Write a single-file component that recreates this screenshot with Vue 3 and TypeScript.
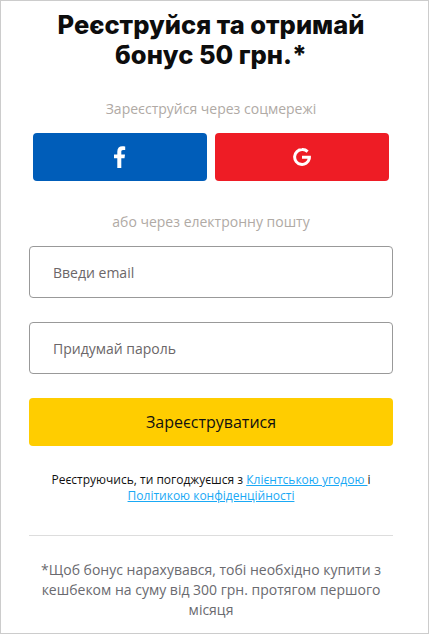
<script setup lang="ts">
const title = 'Реєструйся та отримай бонус 50 грн.*'
</script>

<template>
  <div class="page">
    <h1 class="title">{{ title }}</h1>
    <p class="hint first">Зареєструйся через соцмережі</p>
    <div class="socials">
      <button class="social fb" aria-label="Facebook">
        <svg width="12" height="22" viewBox="0 0 12 22"><path fill="#fff" d="M3.3 22V12.2H0V8.4h3.3V5.6C3.3 2.1 5.3.3 8.3.3c1.3 0 2.4.1 2.9.2v3.4h-2c-1.6 0-1.9.8-1.9 1.9v2.6h3.7l-.5 3.8H7.3V22z"/></svg>
      </button>
      <button class="social gg" aria-label="Google">
        <svg width="18" height="18" viewBox="0 0 18 18"><path fill="none" stroke="#fff" stroke-width="3" d="M14.6 3.6A7.3 7.3 0 0 0 9 1.6a7.4 7.4 0 1 0 7.2 9.2c.1-.4.2-.9.2-1.5H9"/></svg>
      </button>
    </div>
    <p class="hint second">або через електронну пошту</p>
    <div class="field">Введи email</div>
    <div class="field">Придумай пароль</div>
    <button class="submit">Зареєструватися</button>
    <p class="terms">Реєструючись, ти погоджуєшся з <a href="#">Клієнтською угодою </a>і<br><a href="#">Політикою конфіденційності</a></p>
    <hr class="rule">
    <p class="note">*Щоб бонус нарахувався, тобі необхідно купити з кешбеком на суму від 300 грн. протягом першого місяця</p>
  </div>
</template>

<style>
html, body { margin: 0; background: #fff; }
</style>

<style scoped>
.page {
  box-sizing: border-box;
  width: 429px;
  height: 634px;
  border: 1px solid #ccc;
  padding: 9px 35px 0 28px;
  font-family: "Open Sans", sans-serif;
  background: #fff;
  overflow: hidden;
}
.title {
  margin: 0 -10px;
  font-family: "Inter", sans-serif;
  font-weight: 800;
  font-size: 25.5px;
  line-height: 30px;
  color: #0d0d0d;
  text-align: center;
}
.hint {
  margin: 0;
  font-size: 14px;
  line-height: 20px;
  color: #b0aaa5;
  text-align: center;
}
.first { margin-top: 29px; }
.second { margin-top: 31px; }
.socials {
  display: flex;
  gap: 8px;
  margin: 14px 4px 0;
}
.social {
  flex: 1;
  height: 48px;
  border: 0;
  border-radius: 4px;
  display: flex;
  align-items: center;
  justify-content: center;
  padding: 0;
}
.fb { background: #005db9; }
.gg { background: #ee1c25; }
.field {
  box-sizing: border-box;
  height: 52px;
  margin-top: 24px;
  padding: 0 23px;
  border: 1px solid #999;
  border-radius: 4px;
  font-size: 14px;
  line-height: 51px;
  color: #6b6668;
}
.second + .field { margin-top: 14px; }
.submit {
  display: block;
  width: 100%;
  height: 48px;
  margin-top: 24px;
  border: 0;
  border-radius: 4px;
  background: #ffcd00;
  color: #111;
  font-family: inherit;
  font-size: 16px;
}
.terms {
  margin: 26px 0 0;
  font-size: 12px;
  line-height: 16px;
  color: #111;
  text-align: center;
}
.terms a { color: #1aa9f5; }
.rule {
  margin: 31px 0 0;
  border: 0;
  border-top: 1px solid #ddd;
}
.note {
  margin: 24px 4px 0;
  font-size: 14px;
  line-height: 20px;
  color: #6a6a6f;
  text-align: center;
}
</style>
